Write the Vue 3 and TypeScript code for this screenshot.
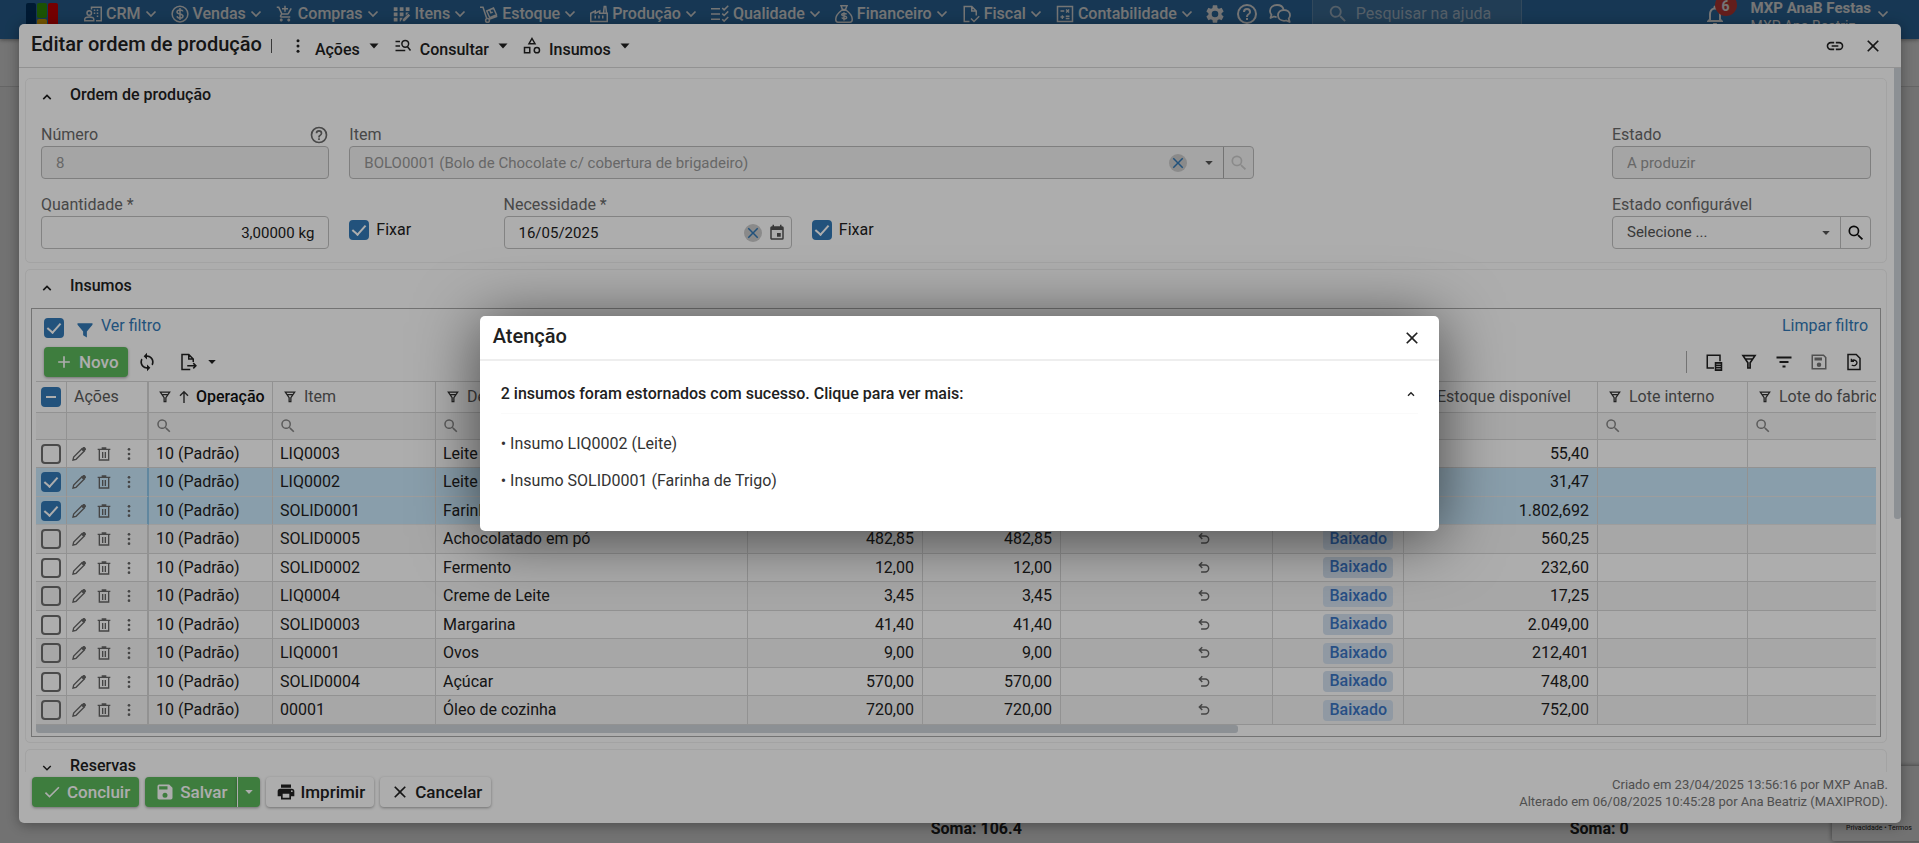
<script setup lang="ts">
import { ref } from 'vue'

interface MenuEntry { icon: string; label: string }
interface Row { id: number; op: string; item: string; desc: string; qty: string; stock: string; checked: boolean }

const icons: Record<string, string> = {
  crm: '<path fill="none" stroke="currentColor" stroke-width="2" d="M10 6V3h13v18h-7M1 21v-2c0-2 3-3 6-3s6 1 6 3v2z"/><circle cx="7" cy="10.500" r="3" fill="none" stroke="currentColor" stroke-width="2"/><path d="M13 6h2v2h-2zM17 6h2v2h-2zM17 10h2v2h-2zM13 10h2v2h-2zM17 14h2v2h-2z"/>',
  sales: '<circle cx="12" cy="12" r="10.500" fill="none" stroke="currentColor" stroke-width="2"/><path fill="none" stroke="currentColor" stroke-width="2" d="M16 8.500c-.5-1.500-2-2-4-2s-4 .8-4 2.700c0 3.600 8 1.800 8 5.500 0 2-2 2.800-4 2.800s-3.600-.7-4-2.500M12 4v16"/>',
  cart: '<path d="M11 9h2V6h3V4h-3V1h-2v3H8v2h3zM7 18c-1.100 0-2 .9-2 2s.9 2 2 2 2-.9 2-2-.9-2-2-2m10 0c-1.100 0-2 .9-2 2s.9 2 2 2 2-.9 2-2-.9-2-2-2m-8.900-5h7.450c.75 0 1.410-.41 1.750-1.030L21.160 4.960 19.420 4l-3.870 7H8.530L4.270 2H1v2h2l3.600 7.590-1.350 2.440C4.520 15.370 5.480 17 7 17h12v-2H7z"/>',
  items: '<path d="M1 3h5v5H1zM9 3h5v5H9zM17 3h5v5h-5zM1 10h5v5H1zM9 10h5v5H9zM17 10h4l-4 4zM1 17h5v5H1zM9 17h4l-3 5H9zM13 19l7.500-7.500 2.500 2.500-7.500 7.500H13z"/>',
  stock: '<path fill="none" stroke="currentColor" stroke-width="2" d="M0 3h4l5 15M12 19l11-4M9 8l9-4 4 9-9 4zM13 6.500l1.500 4 2.500-1"/><circle cx="10" cy="20.500" r="2.500" fill="none" stroke="currentColor" stroke-width="2"/>',
  factory: '<path fill="none" stroke="currentColor" stroke-width="2" d="M1 22V11l6-3v3l6-3v3h10v11zM18 11l1-9h2l1 9"/><path d="M6 14h2v4H6zM11 14h2v4h-2zM16 14h2v4h-2z"/>',
  quality: '<path fill="none" stroke="currentColor" stroke-width="2" d="M0 5h12M0 12h12M0 19h12M15 4l2.500 2.500L23 1M15 11.500l2.500 2.500L23 8.500M15 19l2.500 2.500L23 16"/>',
  finance: '<path fill="none" stroke="currentColor" stroke-width="2" d="M8 1h8l-2 5h-4zM9 7h6c4 3 8 8 8 12 0 2-1 4-3 4H4c-2 0-3-2-3-4 0-4 4-9 8-12zM15.500 12.500c-1-1.800-6.500-1.800-6.500.5 0 2.500 6.500 1 6.500 3.500 0 2.300-5.500 2.300-6.500.2M12 9.500v11"/>',
  fiscal: '<path fill="none" stroke="currentColor" stroke-width="2" d="M10 22H3V2h10l6 6v6M13 2v6h6M12 18l4 4 7-7"/>',
  calc: '<path fill="none" stroke="currentColor" stroke-width="2" d="M2 2h20v20H2z"/><path fill="none" stroke="currentColor" stroke-width="1.800" d="M6 8h5M13.500 6l4 4M17.500 6l-4 4M6 16h5M8.500 13.500v5M13 15h5M13 18h5"/>',
  gear: '<path d="M19.140 12.940c.04-.3.060-.61.060-.94s-.02-.64-.07-.94l2.030-1.580a.49.490 0 0 0 .12-.61l-1.920-3.320a.49.490 0 0 0-.59-.22l-2.390.96a7 7 0 0 0-1.620-.94l-.36-2.540a.48.480 0 0 0-.48-.41h-3.840a.47.470 0 0 0-.47.410l-.36 2.540c-.59.240-1.130.57-1.620.94l-2.390-.96a.48.480 0 0 0-.59.220L2.740 8.870c-.12.210-.08.470.12.610l2.030 1.580c-.05.300-.09.630-.09.940s.02.640.07.940l-2.030 1.580a.49.490 0 0 0-.12.610l1.920 3.320c.12.220.37.290.59.220l2.390-.96c.5.380 1.030.7 1.620.94l.36 2.540c.05.240.24.410.48.410h3.840c.24 0 .44-.17.470-.41l.36-2.540c.59-.24 1.130-.56 1.620-.94l2.390.96c.22.080.47 0 .59-.22l1.920-3.320a.47.470 0 0 0-.12-.61zM12 15.600A3.600 3.600 0 1 1 12 8.400a3.600 3.600 0 0 1 0 7.200"/>',
  help: '<path d="M11 18h2v-2h-2zm1-16a10 10 0 1 0 0 20 10 10 0 0 0 0-20m0 18a8 8 0 1 1 0-16 8 8 0 0 1 0 16m0-14a4 4 0 0 0-4 4h2a2 2 0 1 1 4 0c0 2-3 1.750-3 5h2c0-2.250 3-2.500 3-5a4 4 0 0 0-4-4"/>',
  chat: '<path fill="none" stroke="currentColor" stroke-width="1.800" stroke-linejoin="round" d="M15.500 7.500C15 5 12.500 3 9 3 5 3 2 5.500 2 9c0 1.500.6 2.800 1.500 3.800L2.500 16l3.500-1.500c.8.300 1.700.5 2.600.5M16 8c3.500 0 6 2.300 6 5.300 0 1.300-.5 2.500-1.300 3.400l1 3.300-3.600-1.500c-.7.200-1.400.3-2.100.3-3.500 0-6-2.400-6-5.500S12.500 8 16 8z"/>',
  bell: '<path d="M12 22c1.100 0 2-.9 2-2h-4c0 1.100.9 2 2 2m6-6v-5c0-3.070-1.630-5.640-4.500-6.320V4a1.500 1.500 0 0 0-3 0v.68C7.640 5.360 6 7.920 6 11v5l-2 2v1h16v-1zm-2 1H8v-6c0-2.480 1.510-4.500 4-4.500s4 2.020 4 4.500z"/>',
  search: '<path d="M15.500 14h-.79l-.28-.27A6.500 6.500 0 1 0 13.730 14.430l.27.280v.79l5 4.990L20.490 19zm-6 0a4.500 4.500 0 1 1 0-9 4.500 4.500 0 0 1 0 9"/>',
  down: '<path fill="none" stroke="currentColor" stroke-width="3.500" d="M3 7l9 9 9-9"/>',
  up: '<path fill="none" stroke="currentColor" stroke-width="4" d="M3 17l9-9 9 9"/>',
  caret: '<path d="M3 7h18l-9 10z"/>',
  dots: '<circle cx="12" cy="5" r="2"/><circle cx="12" cy="12" r="2"/><circle cx="12" cy="19" r="2"/>',
  query: '<path fill="none" stroke="currentColor" stroke-width="2" d="M2 6h6M2 12h6M2 18h13M18 13l4 5"/><circle cx="15" cy="9" r="4.500" fill="none" stroke="currentColor" stroke-width="2"/>',
  shapes: '<path fill="none" stroke="currentColor" stroke-width="2" d="M12 2l4 7H8zM2 14h7v7H2z"/><circle cx="18.500" cy="17.500" r="3.500" fill="none" stroke="currentColor" stroke-width="2"/>',
  link: '<path d="M3.900 12c0-1.710 1.390-3.100 3.100-3.100h4V7H7a5 5 0 0 0 0 10h4v-1.900H7c-1.710 0-3.100-1.390-3.100-3.100M8 13h8v-2H8zm9-6h-4v1.900h4a3.100 3.100 0 0 1 0 6.200h-4V17h4a5 5 0 0 0 0-10"/>',
  close: '<path d="M19 6.410 17.590 5 12 10.590 6.410 5 5 6.410 10.590 12 5 17.590 6.410 19 12 13.410 17.590 19 19 17.590 13.410 12z"/>',
  calendar: '<path d="M17 12h-5v5h5zM16 1v2H8V1H6v2H5a2 2 0 0 0-2 2v14c0 1.100.89 2 2 2h14a2 2 0 0 0 2-2V5a2 2 0 0 0-2-2h-1V1zm3 18H5V8h14z"/>',
  funnelFill: '<path d="M2 3h20v2l-7.500 9v8l-5-3v-5L2 5z"/>',
  funnel: '<path fill="none" stroke="currentColor" stroke-width="2.200" d="M4 3.500h16L13.500 13v7h-3v-7zM7 8h10"/>',
  sortUp: '<path fill="none" stroke="currentColor" stroke-width="2.800" d="M12 24V2M4 9.500L12 1.500l8 8"/>',
  plus: '<path d="M19 13h-6v6h-2v-6H5v-2h6V5h2v6h6z"/>',
  refresh: '<path d="M12 4V1L8 5l4 4V6c3.310 0 6 2.690 6 6 0 1.010-.25 1.970-.7 2.800l1.460 1.460C19.540 15.030 20 13.570 20 12c0-4.420-3.580-8-8-8m0 14c-3.310 0-6-2.690-6-6 0-1.010.25-1.970.7-2.800L5.240 7.740C4.460 8.970 4 10.430 4 12c0 4.420 3.580 8 8 8v3l4-4-4-4z"/>',
  exportFile: '<path fill="none" stroke="currentColor" stroke-width="2" d="M19 12V8l-6-6H4v20h11M13 2v6h6M11 17h11M19 13.500l3.500 3.500-3.500 3.500"/>',
  columns: '<path fill="none" stroke="currentColor" stroke-width="2" d="M12 20H3V3h17v8"/><path d="M13 12h10v12H13z"/><path stroke="#fff" stroke-width="1" d="M15 15h6M15 18h6M15 21h6"/>',
  lines: '<path fill="none" stroke="currentColor" stroke-width="2.400" d="M2 6h20M6 12h12M10 18h4"/>',
  saveOut: '<path fill="none" stroke="currentColor" stroke-width="2" d="M3 3h15l3 3v15H3z"/><path d="M6 6h10v4H6z"/><circle cx="12" cy="15.500" r="3"/>',
  restore: '<path fill="none" stroke="currentColor" stroke-width="2" d="M4 2h11l5 5v15H4z"/><path fill="none" stroke="currentColor" stroke-width="1.800" d="M9 10.500c3-2.500 7-.5 7 2.500s-4 5-7 3M8.500 7.500v3.500H12"/>',
  pencil: '<path fill="none" stroke="currentColor" stroke-width="2" d="M3 21l1-4.500L16.500 4 20 7.500 7.500 20z"/><path d="M15 5l3-3c.8-.8 2-.8 2.800 0l1.200 1.200c.8.800.8 2 0 2.800l-3 3z"/>',
  trash: '<path fill="none" stroke="currentColor" stroke-width="2" d="M5 6v15h14V6M2.500 5h19M8.500 3h7M10 9v9M14 9v9"/>',
  undo: '<path fill="none" stroke="currentColor" stroke-width="2.500" d="M9 2L4 7l5 5M4 7h10a5.500 5.500 0 0 1 0 12H7"/>',
  check: '<path d="M9 16.170 4.830 12l-1.420 1.410L9 19 21 7l-1.410-1.410z"/>',
  save: '<path d="M17 3H5a2 2 0 0 0-2 2v14c0 1.100.89 2 2 2h14a2 2 0 0 0 2-2V7zm-5 16a3 3 0 1 1 0-6 3 3 0 0 1 0 6m3-10H5V5h10z"/>',
  print: '<path d="M19 8H5a3 3 0 0 0-3 3v6h4v4h12v-4h4v-6a3 3 0 0 0-3-3m-3 11H8v-5h8zm3-7a1 1 0 1 1 0-2 1 1 0 0 1 0 2M18 3H6v4h12z"/>',
}

const menu: MenuEntry[] = [
  { icon: 'crm', label: 'CRM' }, { icon: 'sales', label: 'Vendas' }, { icon: 'cart', label: 'Compras' },
  { icon: 'items', label: 'Itens' }, { icon: 'stock', label: 'Estoque' }, { icon: 'factory', label: 'Produção' },
  { icon: 'quality', label: 'Qualidade' }, { icon: 'finance', label: 'Financeiro' }, { icon: 'fiscal', label: 'Fiscal' },
  { icon: 'calc', label: 'Contabilidade' },
]
const actions: MenuEntry[] = [
  { icon: 'dots', label: 'Ações' }, { icon: 'query', label: 'Consultar' }, { icon: 'shapes', label: 'Insumos' },
]
const tools = ['columns', 'funnel', 'lines', 'saveOut', 'restore']
const toolNames = ['Colunas', 'Filtrar', 'Ordenar', 'Salvar visão', 'Restaurar visão']

const op = '10 (Padrão)'
const rows = ref<Row[]>([
  { id: 1, op, item: 'LIQ0003', desc: 'Leite', qty: '', stock: '55,40', checked: false },
  { id: 2, op, item: 'LIQ0002', desc: 'Leite', qty: '', stock: '31,47', checked: true },
  { id: 3, op, item: 'SOLID0001', desc: 'Farinha de Trigo', qty: '', stock: '1.802,692', checked: true },
  { id: 4, op, item: 'SOLID0005', desc: 'Achocolatado em pó', qty: '482,85', stock: '560,25', checked: false },
  { id: 5, op, item: 'SOLID0002', desc: 'Fermento', qty: '12,00', stock: '232,60', checked: false },
  { id: 6, op, item: 'LIQ0004', desc: 'Creme de Leite', qty: '3,45', stock: '17,25', checked: false },
  { id: 7, op, item: 'SOLID0003', desc: 'Margarina', qty: '41,40', stock: '2.049,00', checked: false },
  { id: 8, op, item: 'LIQ0001', desc: 'Ovos', qty: '9,00', stock: '212,401', checked: false },
  { id: 9, op, item: 'SOLID0004', desc: 'Açúcar', qty: '570,00', stock: '748,00', checked: false },
  { id: 10, op, item: '00001', desc: 'Óleo de cozinha', qty: '720,00', stock: '752,00', checked: false },
])
const fixQty = ref(true)
const fixDate = ref(true)
const filterOn = ref(true)
const quantity = ref('3,00000 kg')
const need = ref('16/05/2025')
const reversed = ['Insumo LIQ0002 (Leite)', 'Insumo SOLID0001 (Farinha de Trigo)']
const alertOpen = ref(true)
</script>

<template>
  <div class="app">
    <header class="topbar">
      <div class="logo"><i class="navy"></i><span><i class="green-bar"></i><i class="amber"></i></span><i class="red"></i></div>
      <nav class="menu">
        <button v-for="m in menu" :key="m.label" type="button">
          <svg class="i18" viewBox="0 0 24 24" v-html="icons[m.icon]"></svg>{{ m.label }}<svg class="i12" viewBox="0 0 24 24" v-html="icons.down"></svg>
        </button>
      </nav>
      <button class="top-ico" type="button" aria-label="Configurações"><svg class="i22" viewBox="0 0 24 24" v-html="icons.gear"></svg></button>
      <button class="top-ico" type="button" aria-label="Ajuda"><svg class="i24" viewBox="0 0 24 24" v-html="icons.help"></svg></button>
      <button class="top-ico" type="button" aria-label="Conversas"><svg class="i24" viewBox="0 0 24 24" v-html="icons.chat"></svg></button>
      <label class="help-search">
        <svg class="i22" viewBox="0 0 24 24" v-html="icons.search"></svg>
        <input type="text" placeholder="Pesquisar na ajuda" aria-label="Pesquisar na ajuda">
      </label>
      <button class="bell" type="button" aria-label="Notificações">
        <svg class="i24" viewBox="0 0 24 24" v-html="icons.bell"></svg><span class="count">6</span>
      </button>
      <button class="user" type="button">
        <span class="names"><b>MXP AnaB Festas</b><small>MXP Ana Beatriz</small></span>
        <svg class="i12" viewBox="0 0 24 24" v-html="icons.down"></svg>
      </button>
    </header>
    <div class="subbar"></div>
    <main class="behind">
      <span class="sum-a">Soma: 106.4</span>
      <span class="sum-b">Soma: 0</span>
      <div class="privacy">Privacidade • Termos</div>
    </main>

    <div class="overlay">
      <section class="editor" role="dialog" aria-label="Editar ordem de produção">
        <header class="editor-head">
          <h1>Editar ordem de produção</h1><span class="bar"></span>
          <button v-for="a in actions" :key="a.label" class="action" type="button">
            <svg class="i18" viewBox="0 0 24 24" v-html="icons[a.icon]"></svg><span>{{ a.label }}</span><svg class="i12" viewBox="0 0 24 24" v-html="icons.caret"></svg>
          </button>
          <span class="grow"></span>
          <button class="plain" type="button" aria-label="Copiar link"><svg class="i20" viewBox="0 0 24 24" v-html="icons.link"></svg></button>
          <button class="plain" type="button" aria-label="Fechar"><svg class="i20" viewBox="0 0 24 24" v-html="icons.close"></svg></button>
        </header>

        <div class="editor-body">
          <div class="scroll">
            <section class="card order">
              <h2><svg class="i10" viewBox="0 0 24 24" v-html="icons.up"></svg>Ordem de produção</h2>
              <div class="fields">
                <div class="field w2">
                  <div class="label-row"><label for="num">Número</label><svg class="i20" viewBox="0 0 24 24" v-html="icons.help"></svg></div>
                  <div class="box off"><input id="num" type="text" value="8" disabled></div>
                </div>
                <div class="field w6">
                  <label for="item">Item</label>
                  <div class="box off">
                    <input id="item" type="text" value="BOLO0001 (Bolo de Chocolate c/ cobertura de brigadeiro)" disabled>
                    <button class="clear gap" type="button" aria-label="Limpar item"><svg class="i18" viewBox="0 0 24 24" v-html="icons.close"></svg></button>
                    <svg class="i10 drop" viewBox="0 0 24 24" v-html="icons.caret"></svg>
                    <button class="find" type="button" disabled aria-label="Buscar item"><svg class="i20" viewBox="0 0 24 24" v-html="icons.search"></svg></button>
                  </div>
                </div>
                <div class="field side">
                  <label for="state">Estado</label>
                  <div class="box off"><input id="state" type="text" value="A produzir" disabled></div>
                </div>
              </div>
              <div class="fields">
                <div class="field w2">
                  <label for="qty">Quantidade *</label>
                  <div class="box"><input id="qty" v-model="quantity" class="right" type="text"></div>
                </div>
                <label class="fix"><input v-model="fixQty" class="tick" type="checkbox">Fixar</label>
                <div class="field w2">
                  <label for="need">Necessidade *</label>
                  <div class="box">
                    <input id="need" v-model="need" type="text">
                    <button class="clear" type="button" aria-label="Limpar data"><svg class="i18" viewBox="0 0 24 24" v-html="icons.close"></svg></button>
                    <button class="cal" type="button" aria-label="Abrir calendário"><svg class="i18" viewBox="0 0 24 24" v-html="icons.calendar"></svg></button>
                  </div>
                </div>
                <label class="fix"><input v-model="fixDate" class="tick" type="checkbox">Fixar</label>
                <div class="field side">
                  <label for="cfg">Estado configurável</label>
                  <div class="box">
                    <select id="cfg"><option>Selecione ...</option></select>
                    <svg class="i10 drop" viewBox="0 0 24 24" v-html="icons.caret"></svg>
                    <button class="find" type="button" aria-label="Buscar estado"><svg class="i20" viewBox="0 0 24 24" v-html="icons.search"></svg></button>
                  </div>
                </div>
              </div>
            </section>

            <section class="card inputs">
              <h2><svg class="i10" viewBox="0 0 24 24" v-html="icons.up"></svg>Insumos</h2>
              <div class="grid-box">
                <div class="filter-line">
                  <input v-model="filterOn" class="tick" type="checkbox" aria-label="Filtro ativo">
                  <svg class="i18 blue" viewBox="0 0 24 24" v-html="icons.funnelFill"></svg>
                  <a href="#">Ver filtro</a><span class="grow"></span><a href="#">Limpar filtro</a>
                </div>
                <div class="tool-line">
                  <button class="btn green new" type="button"><svg class="i20" viewBox="0 0 24 24" v-html="icons.plus"></svg>Novo</button>
                  <button class="plain" type="button" aria-label="Atualizar"><svg class="i20" viewBox="0 0 24 24" v-html="icons.refresh"></svg></button>
                  <button class="plain export" type="button" aria-label="Exportar"><svg class="i18" viewBox="0 0 24 24" v-html="icons.exportFile"></svg><svg class="i10" viewBox="0 0 24 24" v-html="icons.caret"></svg></button>
                  <span class="grow"></span>
                  <div class="tools">
                    <button v-for="(t, i) in tools" :key="t" :class="['plain', t]" type="button" :aria-label="toolNames[i]"><svg class="i18" viewBox="0 0 24 24" v-html="icons[t]"></svg></button>
                  </div>
                </div>
                <div class="table-wrap">
                  <table>
                    <colgroup>
                      <col class="c-sel"><col class="c-act"><col class="c-op"><col class="c-item"><col class="c-desc"><col class="c-qty">
                      <col class="c-qty2"><col class="c-undo"><col class="c-stat"><col class="c-stock"><col class="c-lot"><col class="c-lot">
                    </colgroup>
                    <thead>
                      <tr class="names-row">
                        <th><input class="tick mixed" type="checkbox" aria-label="Selecionar todos"></th>
                        <th class="acts">Ações</th>
                        <th class="sorted"><span class="th"><svg class="i14" viewBox="0 0 24 24" v-html="icons.funnel"></svg><svg class="i12" viewBox="0 0 24 24" v-html="icons.sortUp"></svg>Operação</span></th>
                        <th><span class="th"><svg class="i14" viewBox="0 0 24 24" v-html="icons.funnel"></svg>Item</span></th>
                        <th><span class="th"><svg class="i14" viewBox="0 0 24 24" v-html="icons.funnel"></svg>Descrição</span></th>
                        <th></th><th></th><th></th><th></th>
                        <th><span class="th end">Estoque disponível</span></th>
                        <th><span class="th"><svg class="i14" viewBox="0 0 24 24" v-html="icons.funnel"></svg>Lote interno</span></th>
                        <th><span class="th"><svg class="i14" viewBox="0 0 24 24" v-html="icons.funnel"></svg>Lote do fabricante</span></th>
                      </tr>
                      <tr class="find-row">
                        <td v-for="n in 12" :key="n"><svg v-if="n > 2" class="i18" viewBox="0 0 24 24" v-html="icons.search"></svg></td>
                      </tr>
                    </thead>
                    <tbody>
                      <tr v-for="r in rows" :key="r.id" :class="{ picked: r.checked }">
                        <td class="sel"><input v-model="r.checked" class="tick" type="checkbox" :aria-label="'Selecionar ' + r.item"></td>
                        <td><span class="row-acts">
                          <button type="button" aria-label="Editar"><svg class="i16" viewBox="0 0 24 24" v-html="icons.pencil"></svg></button>
                          <button type="button" aria-label="Excluir"><svg class="i16" viewBox="0 0 24 24" v-html="icons.trash"></svg></button>
                          <button type="button" aria-label="Mais"><svg class="i16" viewBox="0 0 24 24" v-html="icons.dots"></svg></button>
                        </span></td>
                        <td>{{ r.op }}</td>
                        <td>{{ r.item }}</td>
                        <td>{{ r.desc }}</td>
                        <td class="num">{{ r.qty }}</td>
                        <td class="num">{{ r.qty }}</td>
                        <td class="undo"><button v-if="r.qty" type="button" aria-label="Estornar"><svg class="i14" viewBox="0 0 24 24" v-html="icons.undo"></svg></button></td>
                        <td class="num"><span v-if="r.qty" class="tag">Baixado</span></td>
                        <td class="num">{{ r.stock }}</td>
                        <td></td>
                        <td></td>
                      </tr>
                    </tbody>
                  </table>
                </div>
                <div class="h-track"><div class="h-thumb"></div></div>
              </div>
            </section>

            <section class="card reserves">
              <h2><svg class="i10" viewBox="0 0 24 24" v-html="icons.down"></svg>Reservas</h2>
            </section>
          </div>
          <div class="v-track"><div class="v-thumb"></div></div>
        </div>

        <footer class="editor-foot">
          <button class="btn green" type="button"><svg class="i20" viewBox="0 0 24 24" v-html="icons.check"></svg>Concluir</button>
          <div class="split">
            <button class="btn green" type="button"><svg class="i20" viewBox="0 0 24 24" v-html="icons.save"></svg>Salvar</button>
            <button class="btn green more" type="button" aria-label="Mais opções"><svg class="i10" viewBox="0 0 24 24" v-html="icons.caret"></svg></button>
          </div>
          <button class="btn" type="button"><svg class="i20" viewBox="0 0 24 24" v-html="icons.print"></svg>Imprimir</button>
          <button class="btn" type="button"><svg class="i20" viewBox="0 0 24 24" v-html="icons.close"></svg>Cancelar</button>
          <span class="grow"></span>
          <p>Criado em 23/04/2025 13:56:16 por MXP AnaB.<br>Alterado em 06/08/2025 10:45:28 por Ana Beatriz (MAXIPROD).</p>
        </footer>
      </section>
    </div>

    <div v-if="alertOpen" class="overlay center">
      <section class="alert" role="alertdialog" aria-label="Atenção">
        <header>
          <h1>Atenção</h1>
          <button class="plain" type="button" aria-label="Fechar aviso" @click="alertOpen = false"><svg class="i20" viewBox="0 0 24 24" v-html="icons.close"></svg></button>
        </header>
        <div class="alert-body">
          <button class="summary" type="button">2 insumos foram estornados com sucesso. Clique para ver mais:<svg class="i8" viewBox="0 0 24 24" v-html="icons.up"></svg></button>
          <div class="details"><p v-for="t in reversed" :key="t">• {{ t }}</p></div>
        </div>
      </section>
    </div>
  </div>
</template>

<style>
html, body, #app { height: 100%; }
body { margin: 0; overflow: hidden; }
</style>

<style scoped>
.app, .app * { box-sizing: border-box; }
.app {
  display: flex; flex-direction: column; height: 100%; overflow: hidden; position: relative;
  font: 16px/20px Roboto, "Liberation Sans", sans-serif; color: #212121; background: #f7f7f7;
}
button, input, select { font: inherit; color: inherit; background: none; border: 0; padding: 0; margin: 0; outline: 0; }
svg { display: block; fill: currentColor; flex: none; overflow: visible; }
h1, h2, p { margin: 0; }
.i8 { width: 8px; height: 8px; } .i10 { width: 10px; height: 10px; } .i12 { width: 12px; height: 12px; } .i14 { width: 14px; height: 14px; }
.i16 { width: 16px; height: 16px; } .i18 { width: 18px; height: 18px; } .i20 { width: 20px; height: 20px; }
.i22 { width: 22px; height: 22px; } .i24 { width: 24px; height: 24px; }
.grow { flex: 1; }

.topbar { display: flex; align-items: flex-start; height: 39px; flex: none; padding: 0 30px 0 26px; background: #337ab7; color: #fff; box-shadow: 0 1px 4px rgba(0, 0, 0, .4); z-index: 1; }
.logo { display: flex; gap: 1px; width: 58px; padding-top: 3px; }
.logo i { display: block; width: 10px; height: 30px; border-radius: 2px; }
.logo span { display: flex; flex-direction: column; gap: 1px; }
.logo span i { height: 15px; }
.logo .navy { background: #003a70; } .logo .green-bar { background: #3fb40a; } .logo .amber { background: #fb0; } .logo .red { background: #f00; }
.menu { display: flex; gap: 14px; }
.menu button { display: flex; align-items: center; gap: 4px; height: 27px; font-weight: 500; white-space: nowrap; }
.top-ico { display: flex; align-items: center; height: 27px; margin-left: 9px; }
.menu + .top-ico { margin-left: 11px; }
.help-search { display: flex; align-items: center; gap: 7px; width: 210px; height: 27px; margin-left: 20px; padding-left: 14px; border: solid #6f9fc9; border-width: 0 1px; background: #4a86ba; color: #b8cfe2; }
.help-search input { width: 150px; }
.help-search input::placeholder { color: #b8cfe2; opacity: 1; }
.bell { position: relative; margin-left: auto; padding-top: 3px; }
.count { position: absolute; left: 12px; top: -6px; width: 22px; height: 22px; border-radius: 50%; background: #d9433f; font-size: 14px; font-weight: 700; line-height: 24px; text-align: center; }
.user { display: flex; align-items: flex-start; gap: 6px; margin-left: 24px; text-align: left; }
.user svg { margin-top: 8px; }
.names b, .names small { display: block; line-height: 16px; }
.names b { font-size: 15px; font-weight: 700; }
.names small { font-size: 14px; line-height: 20px; }
.subbar { height: 48px; flex: none; background: #fff; border-bottom: 1px solid #ddd; }
.behind { flex: 1; position: relative; font-weight: 700; background: #fafafa; }
.sum-a, .sum-b { position: absolute; bottom: 4px; left: 48.5%; }
.sum-b { left: 81.8%; }
.privacy { position: absolute; right: -20px; bottom: 2px; width: 107px; height: 75px; display: flex; align-items: flex-end; padding: 0 0 8px 14px; background: #f9f9f9; box-shadow: 0 0 5px gray; border-radius: 2px; font-size: 7px; line-height: 10px; font-weight: 400; }

.overlay { position: absolute; inset: 0; z-index: 2; display: flex; padding: 24px 18px 20px 19px; background: rgba(0, 0, 0, .32); }
.editor { flex: 1; min-width: 0; display: flex; flex-direction: column; background: #fff; border-radius: 5px; overflow: hidden; box-shadow: 0 2px 14px rgba(0, 0, 0, .35); }
.editor-head { display: flex; align-items: center; height: 44px; flex: none; padding: 0 18px 0 12px; border-bottom: 1px solid #d8d8d8; }
.editor-head h1, .alert h1 { font-size: 20px; font-weight: 500; line-height: 24px; padding-bottom: 4px; }
.bar { width: 1px; height: 14px; margin: 0 17px 0 9px; background: #555; }
.action { display: flex; align-items: center; gap: 8px; height: 36px; margin-right: 14px; font-weight: 500; }
.action span { padding-top: 9px; }
.plain { display: flex; align-items: center; justify-content: center; }
.editor-head .plain { margin-left: 18px; }

.editor-body { flex: 1; min-height: 0; display: flex; }
.scroll { flex: 1; min-width: 0; overflow: hidden; padding: 10px 7px 0 6px; }
.v-track { width: 7px; }
.v-thumb { height: 64%; background: #ced4da; border-radius: 0 0 3px 3px; }
.card { border: 1px solid #f0f0f0; border-radius: 5px; margin-bottom: 6px; }
.card h2 { display: flex; align-items: flex-start; gap: 18px; font-size: 16px; font-weight: 500; line-height: 20px; padding: 6px 0 0 16px; height: 34px; }
.card h2 svg { margin-top: 7px; }
.order { height: 185px; padding: 0 15px; }
.order h2 { padding-left: 1px; height: 44px; }
.fields { display: grid; grid-template-columns: repeat(12, minmax(0, 1fr)); column-gap: 20px; height: 70px; }
.field { display: flex; flex-direction: column; color: #6a6a6a; line-height: 23px; }
.w2 { grid-column: span 2; } .w6 { grid-column: span 6; }
.side { grid-column: -3 / -1; justify-self: end; width: 259px; }
.label-row { display: flex; justify-content: space-between; align-items: center; }
.box { display: flex; align-items: center; height: 33px; border: 1px solid #c2c2c2; border-radius: 4px; color: #212121; overflow: hidden; }
.box input, .box select { flex: 1; min-width: 0; height: 31px; padding: 0 14px; font-size: 15px; appearance: none; opacity: 1; }
.box select { color: #555; }
.box .right { text-align: right; }
.off { background: #f3f3f3; border-color: #bcbcbc; }
.off input { color: #999; }
.clear { display: flex; align-items: center; justify-content: center; width: 18px; height: 18px; margin-right: 6px; border-radius: 50%; background: #ccc; color: #337ab7; }
.clear.gap { margin-right: 17px; }
.cal { margin-right: 5px; color: #555; }
.drop { color: #555; margin-right: 9px; }
.find { display: flex; align-items: center; justify-content: center; width: 30px; height: 31px; border-left: 1px solid #c2c2c2; color: #111; }
.off .find { color: #ccc; border-color: #aaa; }
.fix { display: flex; align-items: center; gap: 7px; padding-top: 6px; height: 68px; white-space: nowrap; }
.tick { appearance: none; display: block; flex: none; width: 20px; height: 20px; border: 2px solid #6e6e6e; border-radius: 4px; }
.tick:checked, .mixed { border-color: #337ab7; background: #337ab7; }
.tick:checked::before { content: ""; display: block; width: 6px; height: 11px; margin: 0 auto; border: solid #fff; border-width: 0 2px 2px 0; transform: rotate(42deg); }
.mixed::before { content: ""; display: block; width: 10px; height: 2px; margin: 7px 3px; background: #fff; }

.inputs { padding: 0 5px 5px; }
.inputs h2 { padding-left: 11px; height: 38px; }
.grid-box { border: 1px solid #aaa; padding: 9px 4px 3px; }
.filter-line { display: flex; height: 29px; padding: 0 8px; color: #337ab7; }
.filter-line .blue { margin: 3px 7px 0 12px; }
.filter-line a { color: #337ab7; text-decoration: none; line-height: 16px; }
.tool-line { display: flex; align-items: center; height: 34px; padding: 0 8px 4px; }
.btn { display: flex; align-items: center; gap: 5px; height: 30px; padding: 0 9px 0 10px; border-radius: 4px; font-size: 17px; font-weight: 500; background: #fff; box-shadow: 0 1px 3px rgba(0, 0, 0, .35); white-space: nowrap; }
.btn.green { background: #5cb85c; color: #fff; }
.new { margin-right: 9px; }
.export { gap: 10px; margin-left: 22px; }
.tools { display: flex; gap: 17px; padding: 2px 5px 2px 18px; border-left: 1px solid #aaa; }
.saveOut { color: #777; }

.table-wrap { overflow: hidden; }
table { table-layout: fixed; border-collapse: separate; border-spacing: 0; width: 1862px; border-top: 1px solid #d8d8d8; }
.c-sel { width: 31px; } .c-act { width: 82px; } .c-op { width: 124px; } .c-item { width: 163px; } .c-desc { width: 312px; }
.c-qty { width: 175px; } .c-qty2 { width: 138px; } .c-undo { width: 212px; } .c-stat { width: 131px; } .c-stock { width: 194px; } .c-lot { width: 150px; }
th, td { padding: 0 8px 0 7px; border: solid #d8d8d8; border-width: 0 1px 1px 0; overflow: hidden; white-space: nowrap; text-align: left; }
th:nth-child(2), td:nth-child(2) { border-right-width: 2px; }
th { height: 31px; font-weight: 400; color: #5c5c5c; }
th:first-child, td.sel { padding: 0 5px; }
.th { display: flex; align-items: center; gap: 7px; padding-left: 3px; }
.th svg { color: #333; }
.th.end { justify-content: flex-end; padding-right: 18px; }
.sorted { padding-right: 0; font-weight: 500; color: #111; }
.sorted .th { gap: 6px; padding-left: 2px; }
.find-row td { height: 27px; padding-left: 6px; background: #f6f6f6; color: #888; }
tbody td { height: 28px; line-height: 20px; }
tbody tr:nth-child(even) td { height: 29px; background: #f6f6f6; }
tbody tr.picked td, tbody tr.picked:nth-child(even) td { background: #cbe9fc; border-bottom-color: #e8e8e8; }
tbody tr.picked td:nth-child(2) { border-right-color: #8fc8ea; }
.row-acts { display: flex; gap: 9px; color: #666; margin-left: -3px; }
.row-acts button, .undo button { display: flex; color: #666; }
.undo button { margin-left: 129px; }
.num { text-align: right; }
.tag { display: inline-block; height: 21px; line-height: 20px; margin-right: 2px; padding: 0 6px; border-radius: 4px; background: #d5e2f0; color: #3a75c4; font-weight: 500; vertical-align: top; }
.h-track { height: 8px; }
.h-thumb { width: 65.3%; height: 8px; background: #ced4da; border-radius: 0 3px 3px 3px; }

.reserves { height: 60px; }
.editor-foot { display: flex; align-items: flex-start; gap: 6px; flex: none; height: 51px; padding: 5px 13px 0; }
.editor-foot p { font-size: 13px; line-height: 17px; text-align: right; color: #757575; margin-top: -1px; }
.split { display: flex; }
.split .btn:first-child { border-radius: 4px 0 0 4px; }
.split .more { padding: 0 6px; border-left: 1px solid #fff; border-radius: 0 4px 4px 0; }

.center { align-items: center; justify-content: center; z-index: 3; padding: 4px 0 0; }
.alert { width: 50%; height: 215px; background: #fff; border-radius: 5px; box-shadow: 0 6px 64px rgba(0, 0, 0, .6); }
.alert header { display: flex; align-items: center; justify-content: space-between; height: 45px; padding: 0 17px 0 13px; border-bottom: 2px solid #eee; }
.alert-body { padding: 14px 21px; }
.summary { display: flex; align-items: center; justify-content: space-between; width: 100%; height: 38px; padding-right: 3px; font-weight: 500; }
.details { border-top: 1px solid #fafafa; padding-top: 20px; color: #333; }
.details p { line-height: 20px; margin-bottom: 17px; }
</style>
